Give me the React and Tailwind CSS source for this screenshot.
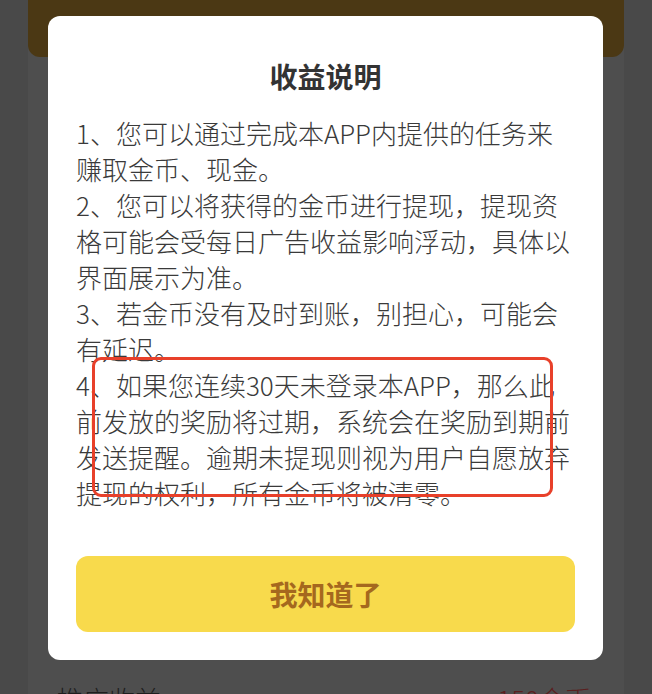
export default function App() {
  const font = { fontFamily: '"Noto Sans CJK SC", "Noto Sans", sans-serif' };
  const lines = [
    "1、您可以通过完成本APP内提供的任务来",
    "赚取金币、现金。",
    "2、您可以将获得的金币进行提现，提现资",
    "格可能会受每日广告收益影响浮动，具体以",
    "界面展示为准。",
    "3、若金币没有及时到账，别担心，可能会",
    "有延迟。",
    "4、如果您连续30天未登录本APP，那么此",
    "前发放的奖励将过期，系统会在奖励到期前",
    "发送提醒。逾期未提现则视为用户自愿放弃",
    "提现的权利，所有金币将被清零。",
  ];
  return (
    <div
      className="relative w-[652px] h-[694px] overflow-hidden bg-[#494949]"
      style={font}
    >
      {/* dimmed page behind */}
      <div className="mx-[28px] h-full bg-[#4e4e4e] flex flex-col">
        <div className="h-[57px] bg-[#4b3814] rounded-b-[12px]" />
        <div className="flex-1" />
        <div className="flex justify-between items-start h-[8px] px-[29px] overflow-visible">
          <span className="text-[26px] leading-[26px] font-light text-[#1e1e1e] whitespace-nowrap">推广收益</span>
          <span className="text-[26px] leading-[26px] font-light text-[#5a1f1f] whitespace-nowrap mr-[4px]">150金币</span>
        </div>
      </div>

      {/* modal */}
      <div className="absolute left-[48px] top-[16px] w-[555px] h-[644px] bg-white rounded-[12px] px-[28px] pt-[40px] pb-[28px] flex flex-col">
        <div className="text-center text-[28px] leading-[40px] font-bold text-[#333333]">
          收益说明
        </div>
        <div className="mt-[19px] text-[26px] leading-[36px] font-light text-[#3a3a3a]">
          {lines.map((l, i) => (
            <div key={i} className="whitespace-nowrap">
              {l}
            </div>
          ))}
        </div>
        <div className="flex-1" />
        <button className="h-[76px] w-full rounded-[12px] bg-[#f8da4c] text-[28px] font-bold text-[#a5681e]">
          我知道了
        </button>
      </div>

      {/* red annotation box */}
      <div className="absolute left-[92px] top-[357px] w-[461px] h-[140px] border-[3px] border-[#e8402a] rounded-[9px]" />
    </div>
  );
}
